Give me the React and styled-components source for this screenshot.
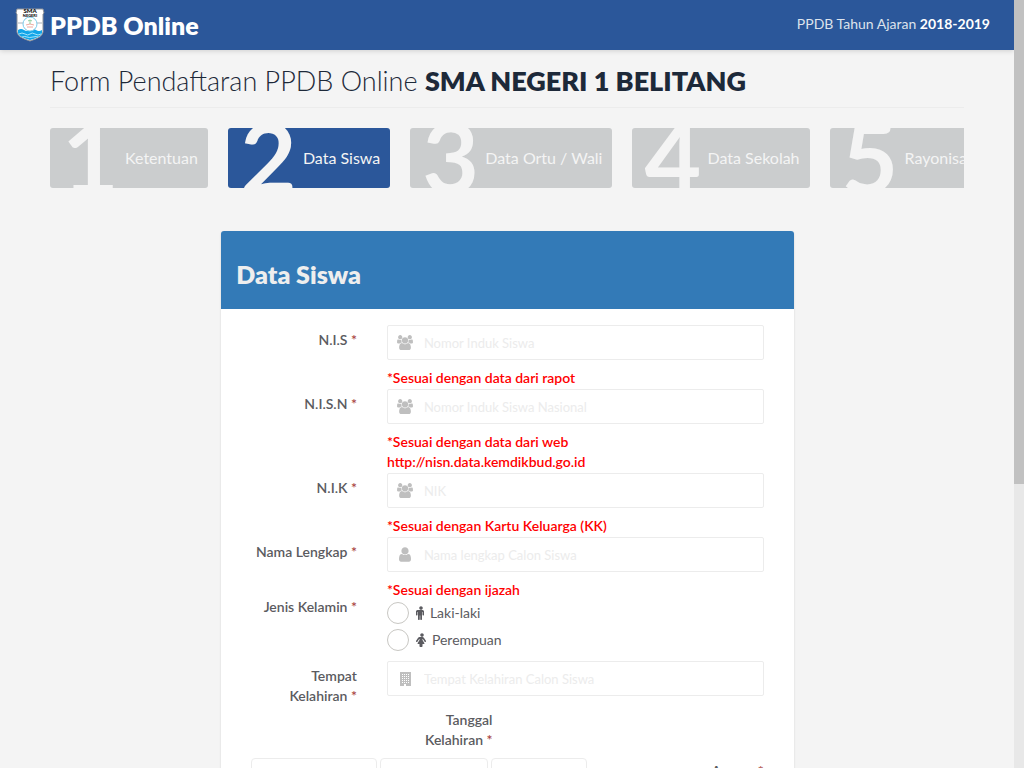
import React from "react";
import styled, { createGlobalStyle } from "styled-components";

const GlobalStyle = createGlobalStyle`
  * {
    box-sizing: border-box;
  }

  body {
    margin: 0;
    background: #f4f4f4;
    color: #5b5b60;
    font-family: Lato, sans-serif;
    font-size: 14px;
    line-height: 20px;
  }
`;

const Shell = styled.div`
  display: flex;
  height: 100vh;
`;

const Page = styled.div`
  flex: 1;
  min-width: 0;
  overflow-x: hidden;
  overflow-y: auto;
  scrollbar-width: none;
`;

const ScrollTrack = styled.div`
  width: 10px;
  background: #e8e8e8;
`;

const ScrollThumb = styled.div`
  height: 63%;
  background: #c1c1c1;
`;

const TopBar = styled.header`
  display: flex;
  align-items: center;
  justify-content: space-between;
  height: 50px;
  padding: 0 24px 0 15px;
  background: #2b579a;
  box-shadow: 0 1px 5px rgba(0, 0, 0, 0.15);
`;

const Brand = styled.a`
  display: flex;
  align-items: center;
  gap: 5px;
  color: #fff;
  font-size: 25px;
  font-weight: 800;
  line-height: 50px;
  text-decoration: none;
`;

const Year = styled.span`
  padding-bottom: 2px;
  color: #dde3ec;

  b {
    color: #fff;
  }
`;

const Main = styled.main`
  padding: 0 50px;
`;

const PageTitle = styled.h1`
  margin: 0 0 20px;
  padding: 15px 0 10px;
  border-bottom: 1px solid #ececec;
  color: #1d2939;
  font-size: 27px;
  font-weight: 300;
  line-height: 32px;

  b {
    font-weight: 800;
  }
`;

const Steps = styled.ol`
  display: flex;
  gap: 20px;
  margin: 0 0 43px;
  padding: 0;
  overflow: hidden;
  list-style: none;
`;

const Step = styled.li`
  display: flex;
  flex-shrink: 0;
  align-items: center;
  height: 60px;
  padding: 0 10px 0 12px;
  border-radius: 3px;
  overflow: hidden;
  background: ${(props) => (props.$active ? "#2b579a" : "#cbcdce")};
  color: #f4f4f4;
  font-size: 16px;
`;

const StepNumber = styled.span`
  width: 63px;
  padding-bottom: 4px;
  font-size: 98px;
  font-weight: 700;
  line-height: 60px;
`;

const Column = styled.div`
  width: 66.67%;
  margin: 0 auto;
  padding: 0 18px 0 19px;
`;

const Panel = styled.section`
  border-radius: 3px;
  background: #fff;
  box-shadow: 0 1px 2px rgba(0, 0, 0, 0.15);
`;

const PanelHeading = styled.div`
  padding: 28px 15px 20px;
  border-radius: 3px 3px 0 0;
  background: #337ab7;

  h2 {
    margin: 0;
    color: #eee;
    font-size: 25px;
    font-weight: 800;
    line-height: 30px;
  }
`;

const Form = styled.form`
  padding: 12px 15px 30px;
`;

const Row = styled.div`
  display: grid;
  grid-template-columns: 1fr 3fr;
  margin-bottom: ${(props) => props.$gap || 0}px;
`;

const LabelCell = styled.div`
  padding: ${(props) => (props.$flush ? 0 : 9)}px 15px 0;
  font-weight: 600;
  text-align: right;
`;

const Star = styled.span`
  color: #a94442;
`;

const Control = styled.div`
  padding: 4px 15px 0;
`;

const InputBox = styled.div`
  display: flex;
  align-items: center;
  height: 35px;
  padding-left: 9px;
  border: 1px solid #ececec;
  border-radius: 2px;
  color: #bfbfbf;

  svg {
    flex-shrink: 0;
  }

  input {
    flex: 1;
    min-width: 0;
    height: 33px;
    padding: 0 11px;
    border: 0;
    outline: 0;
    background: transparent;
    color: #5b5b60;
    font: 13px Lato, sans-serif;
  }

  input::placeholder {
    color: #ececec;
  }
`;

const Hint = styled.p`
  margin: 8px 0 -3px;
  color: #f00;
  font-weight: 600;
`;

const RadioList = styled.div`
  display: grid;
  gap: 3px;
`;

const RadioLabel = styled.label`
  display: flex;
  align-items: center;
  height: 24px;

  svg {
    margin: 0 3px 0 6px;
  }
`;

const Radio = styled.input`
  appearance: none;
  width: 22px;
  height: 22px;
  margin: 0;
  border: 1px solid #c8c7c3;
  border-radius: 50%;
  background: #fff;

  &:checked {
    border: 6px solid #2b579a;
  }
`;

const HalfLabel = styled.div`
  width: 50%;
  padding: 4px 15px 8px;
  font-weight: 600;
  text-align: right;
`;

const DateRow = styled.div`
  display: flex;
  gap: 3px;
  padding: 0 15px;

  label {
    flex: 1;
    padding-top: 3px;
    font-weight: 600;
    text-align: right;
  }
`;

const Select = styled.select`
  width: ${(props) => props.$width}px;
  height: 34px;
  padding: 6px;
  border: 1px solid #ececec;
  border-radius: 4px;
  appearance: none;
  background: #fff;
  color: #5b5b60;
  font: 14px Lato, sans-serif;
`;

const Crest = () => (
  <svg width="30" height="34" viewBox="0 0 30 34" aria-hidden="true">
    <path
      d="M2 1h26l1 4-1 1v18q0 5-13 9Q2 29 2 24V6L1 5z"
      fill="#fff"
      stroke="#8d9299"
      strokeWidth="1"
    />
    <path d="M3 22q3-2 6 0t6 0 6 0 6 0v3q-1 4-12 7Q4 29 3 25z" fill="#12a5e8" />
    <path
      d="M4 26q3-2 6 0t5 0 5 0 6 0M7 29q3-1 5 0t6 0 5 0"
      fill="none"
      stroke="#a5e4fb"
      strokeWidth="1"
    />
    <path d="M3 15h5M22 15h5" stroke="#aab3bb" strokeWidth="1" />
    <circle cx="15" cy="16" r="7" fill="#fff" stroke="#7acbea" strokeWidth="1" />
    <path d="M11 17q4-2 8 0M12 19h6" fill="none" stroke="#edaaa0" strokeWidth="1" />
    <path d="M13 13q2-2 4 0M15 12v4" fill="none" stroke="#8fcf9d" strokeWidth="1" />
    <text x="15" y="5" textAnchor="middle" fontSize="6" fontWeight="900" fill="#111">
      SMA
    </text>
    <text x="15" y="9" textAnchor="middle" fontSize="4" fontWeight="900" fill="#111">
      NEGERI
    </text>
  </svg>
);

const UsersIcon = () => (
  <svg width="16" height="15" viewBox="0 0 1920 1792" fill="currentColor">
    <path d="M593 896q-162 5-265 128h-134q-82 0-138-40.5t-56-118.5q0-353 124-353 6 0 43.5 21t97.5 42.5 119 21.5q67 0 133-23-5 37-5 66 0 139 81 256zm1071 637q0 120-73 189.5t-194 69.5h-874q-121 0-194-69.5t-73-189.5q0-53 3.5-103.5t14-109 26.5-108.5 43-97.5 62-81 85.5-53.5 111.5-20q10 0 43 21.5t73 48 107 48 135 21.5 135-21.5 107-48 73-48 43-21.5q61 0 111.5 20t85.5 53.5 62 81 43 97.5 26.5 108.5 14 109 3.5 103.5zm-1024-1277q0 106-75 181t-181 75-181-75-75-181 75-181 181-75 181 75 75 181zm704 384q0 159-112.5 271.5t-271.5 112.5-271.5-112.5-112.5-271.5 112.5-271.5 271.5-112.5 271.5 112.5 112.5 271.5zm576 225q0 78-56 118.5t-138 40.5h-134q-103-123-265-128 81-117 81-256 0-29-5-66 66 23 133 23 59 0 119-21.5t97.5-42.5 43.5-21q124 0 124 353zm-128-609q0 106-75 181t-181 75-181-75-75-181 75-181 181-75 181 75 75 181z" />
  </svg>
);

const UserIcon = () => (
  <svg width="16" height="15" viewBox="128 96 1536 1600" fill="currentColor">
    <path d="M1536 1399q0 109-62.5 187t-150.5 78h-854q-88 0-150.5-78t-62.5-187q0-85 8.5-160.5t31.5-152 58.5-131 94-89 134.5-34.5q131 128 313 128t313-128q76 0 134.5 34.5t94 89 58.5 131 31.5 152 8.5 160.5zm-256-887q0 159-112.5 271.5t-271.5 112.5-271.5-112.5-112.5-271.5 112.5-271.5 271.5-112.5 271.5 112.5 112.5 271.5z" />
  </svg>
);

const BuildingIcon = () => (
  <svg width="16" height="16" viewBox="0 0 16 16" fill="currentColor">
    <path
      fillRule="evenodd"
      d="M3 1h11v14H9v-2H7v2H3zM5 3v1h1V3zm2 0v1h1V3zm2 0v1h1V3zm2 0v1h1V3zM5 5v1h1V5zm2 0v1h1V5zm2 0v1h1V5zm2 0v1h1V5zM5 7v1h1V7zm2 0v1h1V7zm2 0v1h1V7zm2 0v1h1V7zM5 9v1h1V9zm2 0v1h1V9zm2 0v1h1V9zm2 0v1h1V9zM5 11v1h1v-1zm2 0v1h1v-1zm2 0v1h1v-1zm2 0v1h1v-1z"
    />
  </svg>
);

const MaleIcon = () => (
  <svg width="12" height="14" viewBox="128 0 1536 1792" fill="currentColor">
    <path d="M1280 704v416q0 40-28 68t-68 28-68-28-28-68v-352h-64v912q0 46-33 79t-79 33-79-33-33-79v-464h-64v464q0 46-33 79t-79 33-79-33-33-79v-912h-64v352q0 40-28 68t-68 28-68-28-28-68v-416q0-80 56-136t136-56h640q80 0 136 56t56 136zm-160-448q0 93-65.5 158.5t-158.5 65.5-158.5-65.5-65.5-158.5 65.5-158.5 158.5-65.5 158.5 65.5 65.5 158.5z" />
  </svg>
);

const FemaleIcon = () => (
  <svg width="14" height="14" viewBox="0 0 1792 1792" fill="currentColor">
    <path d="M1408 1056q0 40-28 68t-68 28q-51 0-80-43l-227-341h-45v132l247 411q9 15 9 33 0 26-19 45t-45 19h-192v272q0 46-33 79t-79 33h-160q-46 0-79-33t-33-79v-272h-192q-26 0-45-19t-19-45q0-18 9-33l247-411v-132h-45l-227 341q-29 43-80 43-40 0-68-28t-28-68q0-29 16-53l256-384q73-107 176-107h384q103 0 176 107l256 384q16 24 16 53zm-288-800q0 93-65.5 158.5t-158.5 65.5-158.5-65.5-65.5-158.5 65.5-158.5 158.5-65.5 158.5 65.5 65.5 158.5z" />
  </svg>
);

const steps = ["Ketentuan", "Data Siswa", "Data Ortu / Wali", "Data Sekolah", "Rayonisasi"];

const TextField = ({ id, label, placeholder, icon, hint }) => (
  <Row>
    <LabelCell>
      <label htmlFor={id}>
        {label} <Star>*</Star>
      </label>
    </LabelCell>
    <Control>
      <InputBox>
        {icon}
        <input id={id} type="text" placeholder={placeholder} />
      </InputBox>
      {hint && <Hint>{hint}</Hint>}
    </Control>
  </Row>
);

const App = () => {
  return (
    <Shell>
      <GlobalStyle />
      <Page>
        <TopBar>
          <Brand href="#">
            <Crest />
            PPDB Online
          </Brand>
          <Year>
            PPDB Tahun Ajaran <b>2018-2019</b>
          </Year>
        </TopBar>

        <Main>
          <PageTitle>
            Form Pendaftaran PPDB Online <b>SMA NEGERI 1 BELITANG</b>
          </PageTitle>

          <Steps>
            {steps.map((name, i) => (
              <Step key={name} $active={i === 1}>
                <StepNumber>{i + 1}</StepNumber>
                {name}
              </Step>
            ))}
          </Steps>

          <Column>
            <Panel>
              <PanelHeading>
                <h2>Data Siswa</h2>
              </PanelHeading>
              <Form>
                <TextField
                  id="nis"
                  label="N.I.S"
                  placeholder="Nomor Induk Siswa"
                  icon={<UsersIcon />}
                  hint="*Sesuai dengan data dari rapot"
                />
                <TextField
                  id="nisn"
                  label="N.I.S.N"
                  placeholder="Nomor Induk Siswa Nasional"
                  icon={<UsersIcon />}
                  hint={
                    <>
                      *Sesuai dengan data dari web
                      <br />
                      http://nisn.data.kemdikbud.go.id
                    </>
                  }
                />
                <TextField
                  id="nik"
                  label="N.I.K"
                  placeholder="NIK"
                  icon={<UsersIcon />}
                  hint="*Sesuai dengan Kartu Keluarga (KK)"
                />
                <TextField
                  id="nama"
                  label="Nama Lengkap"
                  placeholder="Nama lengkap Calon Siswa"
                  icon={<UserIcon />}
                  hint="*Sesuai dengan ijazah"
                />

                <Row $gap={5} role="radiogroup" aria-labelledby="gender">
                  <LabelCell $flush id="gender">
                    Jenis Kelamin <Star>*</Star>
                  </LabelCell>
                  <Control>
                    <RadioList>
                      <RadioLabel>
                        <Radio type="radio" name="gender" value="L" />
                        <MaleIcon />
                        Laki-laki
                      </RadioLabel>
                      <RadioLabel>
                        <Radio type="radio" name="gender" value="P" />
                        <FemaleIcon />
                        Perempuan
                      </RadioLabel>
                    </RadioList>
                  </Control>
                </Row>

                <TextField
                  id="tempat"
                  label="Tempat Kelahiran"
                  placeholder="Tempat Kelahiran Calon Siswa"
                  icon={<BuildingIcon />}
                />

                <HalfLabel id="lahir">
                  Tanggal
                  <br />
                  Kelahiran <Star>*</Star>
                </HalfLabel>
                <DateRow>
                  <Select $width={126} aria-labelledby="lahir">
                    <option>Tanggal</option>
                  </Select>
                  <Select $width={108} aria-labelledby="lahir">
                    <option>Bulan</option>
                  </Select>
                  <Select $width={96} aria-labelledby="lahir">
                    <option>Tahun</option>
                  </Select>
                  <label htmlFor="agama">
                    Agama <Star>*</Star>
                  </label>
                </DateRow>
                <Row>
                  <span />
                  <Control>
                    <InputBox>
                      <input id="agama" type="text" />
                    </InputBox>
                  </Control>
                </Row>
              </Form>
            </Panel>
          </Column>
        </Main>
      </Page>
      <ScrollTrack>
        <ScrollThumb />
      </ScrollTrack>
    </Shell>
  );
};

export default App;
